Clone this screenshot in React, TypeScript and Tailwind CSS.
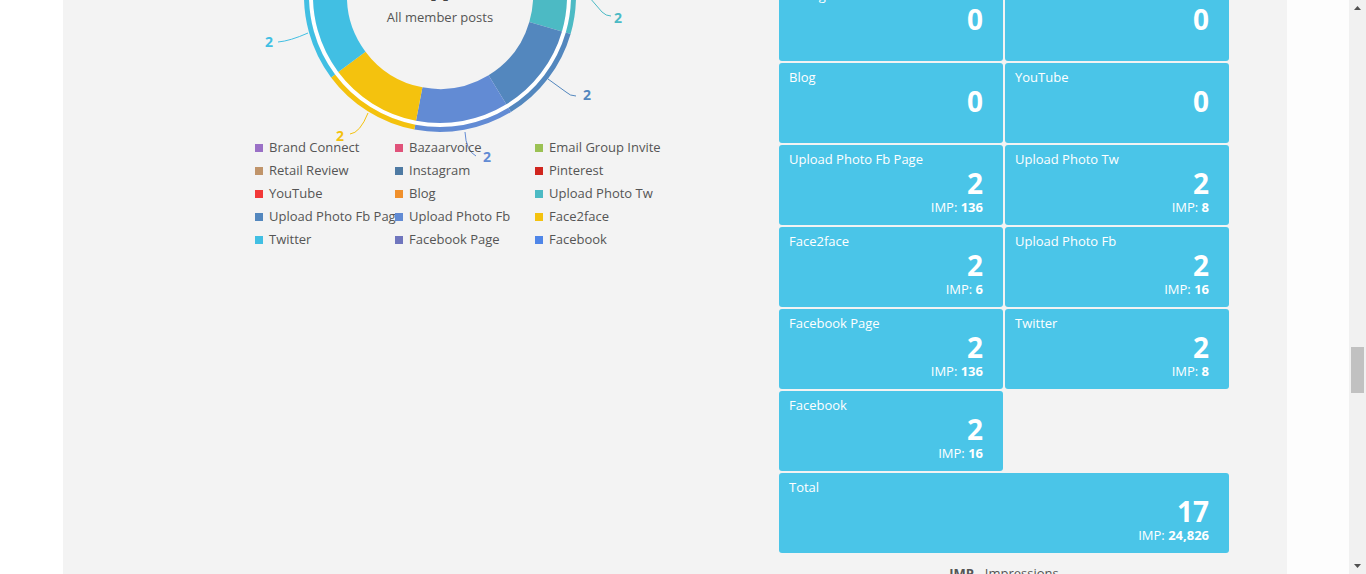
const legend: [string, string][] = [
  ["Brand Connect", "#9a70c6"],
  ["Bazaarvoice", "#e0527a"],
  ["Email Group Invite", "#9bc153"],
  ["Retail Review", "#c0946a"],
  ["Instagram", "#4e7aa3"],
  ["Pinterest", "#d0251e"],
  ["YouTube", "#f23838"],
  ["Blog", "#f0902c"],
  ["Upload Photo Tw", "#4cbac4"],
  ["Upload Photo Fb Page", "#5387be"],
  ["Upload Photo Fb", "#628bd4"],
  ["Face2face", "#f4c20e"],
  ["Twitter", "#41bfe3"],
  ["Facebook Page", "#6f75bd"],
  ["Facebook", "#4f86e8"],
];

const tiles = [
  { name: "Brand Connect", value: 1, imp: "120" },
  { name: "Bazaarvoice", value: 0 },
  { name: "Email Group Invite", value: 2, imp: "24,380" },
  { name: "Retail Review", value: 0 },
  { name: "Instagram", value: 0 },
  { name: "Pinterest", value: 0 },
  { name: "Blog", value: 0 },
  { name: "YouTube", value: 0 },
  { name: "Upload Photo Fb Page", value: 2, imp: "136" },
  { name: "Upload Photo Tw", value: 2, imp: "8" },
  { name: "Face2face", value: 2, imp: "6" },
  { name: "Upload Photo Fb", value: 2, imp: "16" },
  { name: "Facebook Page", value: 2, imp: "136" },
  { name: "Twitter", value: 2, imp: "8" },
  { name: "Facebook", value: 2, imp: "16" },
];

const values: Record<string, number> = {
  "Brand Connect": 1,
  "Email Group Invite": 2,
  "Upload Photo Tw": 2,
  "Upload Photo Fb Page": 2,
  "Upload Photo Fb": 2,
  Face2face: 2,
  Twitter: 2,
  "Facebook Page": 2,
  Facebook: 2,
};

const cx = 200;
const cy = 150;

function arc(r: number, a0: number, a1: number) {
  const rad = (d: number) => (d * Math.PI) / 180;
  const x0 = cx + r * Math.cos(rad(a0));
  const y0 = cy + r * Math.sin(rad(a0));
  const x1 = cx + r * Math.cos(rad(a1));
  const y1 = cy + r * Math.sin(rad(a1));
  const large = a1 - a0 > 180 ? 1 : 0;
  return `M ${x0} ${y0} A ${r} ${r} 0 ${large} 1 ${x1} ${y1}`;
}

function Donut() {
  const total = 17;
  let angle = -89.7;
  const slices = legend
    .filter(([name]) => values[name])
    .map(([name, color]) => {
      const sweep = (values[name] / total) * 360;
      const s = { name, color, a0: angle, a1: angle + sweep };
      angle += sweep;
      return s;
    });

  const labels = [
    { d: "M 337 137 L 362 166 Q 366 170 371 170", color: "#4bbac5", x: 374, y: 177, anchor: "start" },
    { d: "M 308 233 L 326 246 Q 330 250 336 250", color: "#5387be", x: 343, y: 254, anchor: "start" },
    { d: "M 225 286 Q 226 305 236 310", color: "#628bd4", x: 243, y: 316, anchor: "start" },
    { d: "M 128 267 Q 120 287 110 288", color: "#f4c20e", x: 104, y: 295, anchor: "end" },
    { d: "M 68 187 Q 50 195 38 196", color: "#41bfe3", x: 33, y: 201, anchor: "end" },
  ];

  return (
    <svg width="400" height="290" viewBox="0 0 400 290" className="block overflow-visible">
      <circle cx={cx} cy={cy} r={129} fill="none" stroke="#ffffff" strokeWidth={4} />
      {slices.map((s) => (
        <g key={s.name}>
          <path d={arc(110, s.a0, s.a1)} fill="none" stroke={s.color} strokeWidth={34} />
          <path d={arc(133.5, s.a0, s.a1)} fill="none" stroke={s.color} strokeWidth={5} />
        </g>
      ))}
      {labels.map((l) => (
        <g key={l.d}>
          <path d={l.d} fill="none" stroke={l.color} strokeWidth={1} />
          <text
            x={l.x}
            y={l.y}
            textAnchor={l.anchor as "start" | "end"}
            fill={l.color}
            fontSize="14"
            fontWeight="700"
            fontFamily="'Open Sans', sans-serif"
          >
            2
          </text>
        </g>
      ))}
      <text x={cx} y={155} textAnchor="middle" fill="#444" fontSize="28" fontWeight="700" fontFamily="'Open Sans', sans-serif">
        17
      </text>
      <text x={cx} y={175.5} textAnchor="middle" fill="#555" fontSize="13" fontFamily="'Open Sans', sans-serif">
        All member posts
      </text>
    </svg>
  );
}

function Tile({ name, value, imp, wide }: { name: string; value: number; imp?: string; wide?: boolean }) {
  return (
    <div className={`h-[80px] rounded-[3px] bg-[#4ac5e8] pl-[10px] pr-[20px] pt-[5px] text-white ${wide ? "col-span-2" : ""}`}>
      <div className="text-[13px] leading-[18px] whitespace-nowrap">{name}</div>
      <div className="text-right text-[28px] font-bold leading-[30px]">{value}</div>
      {value > 0 && (
        <div className="text-right text-[13px] leading-[18px]">
          IMP: <b>{imp}</b>
        </div>
      )}
    </div>
  );
}

export default function App() {
  return (
    <div className="flex h-[574px] w-[1366px] overflow-hidden bg-[#fdfdfd] font-['Open_Sans',sans-serif]">
      <div className="w-[63px] shrink-0 bg-white" />
      <main className="w-[1224px] shrink-0 bg-[#f3f3f3]">
        <div className="-mt-[183px] flex pr-[58px]">
          <section className="flex-1 pl-[177px] pt-[29px]">
            <Donut />
            <ul className="grid grid-cols-[140px_140px_140px] pl-[15px] text-[13px] leading-[23px] text-[#555]">
              {legend.map(([name, color]) => (
                <li key={name} className="flex items-center whitespace-nowrap">
                  <span className="relative mr-[6px] h-[8px] w-[8px] shrink-0" style={{ backgroundColor: color }} />
                  {name}
                </li>
              ))}
            </ul>
          </section>
          <section className="w-[450px]">
            <div className="grid grid-cols-2 gap-[2px]">
              {tiles.map((t) => (
                <Tile key={t.name} {...t} />
              ))}
              <Tile name="Total" value={17} imp="24,826" wide />
            </div>
            <p className="mt-[10px] text-center text-[13px] leading-[20px] text-[#555]">
              <b>IMP</b> - Impressions
            </p>
          </section>
        </div>
      </main>
      <div className="w-[62px] shrink-0 bg-[#fdfdfd]" />
      <div className="relative w-[17px] shrink-0 bg-[#f1f1f1]">
        <svg width="17" height="17" viewBox="0 0 17 17" className="absolute left-0 top-0">
          <path d="M5 10 L8.5 6 L12 10 Z" fill="#505050" />
        </svg>
        <div className="absolute left-[2px] top-[347px] h-[46px] w-[13px] bg-[#c1c1c1]" />
        <svg width="17" height="17" viewBox="0 0 17 17" className="absolute bottom-0 left-0">
          <path d="M5 7 L8.5 11 L12 7 Z" fill="#505050" />
        </svg>
      </div>
    </div>
  );
}
